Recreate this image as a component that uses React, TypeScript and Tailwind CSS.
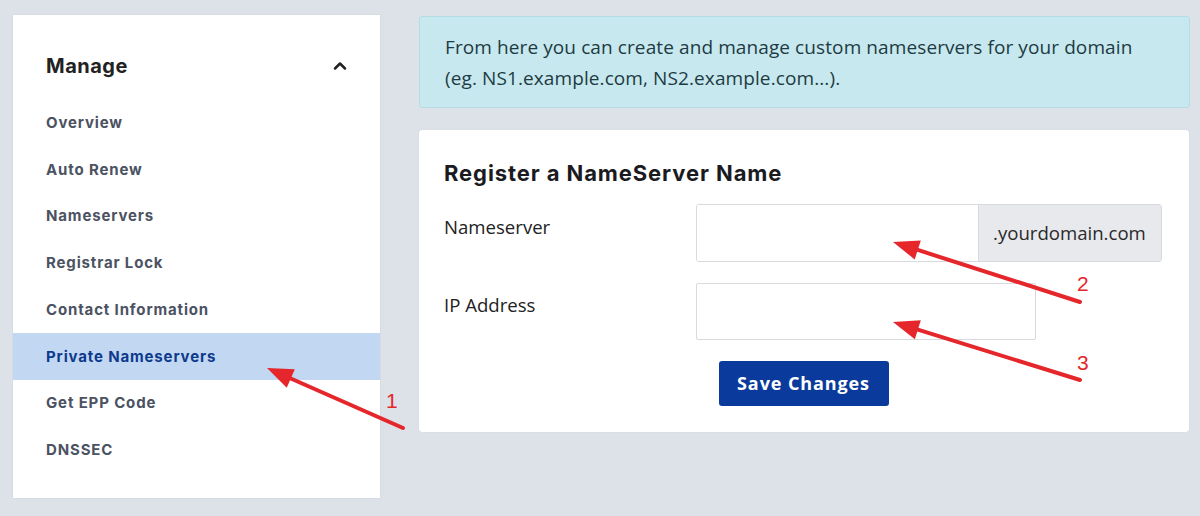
import { ChevronUp } from "lucide-react";

const items = [
  "Overview",
  "Auto Renew",
  "Nameservers",
  "Registrar Lock",
  "Contact Information",
  "Private Nameservers",
  "Get EPP Code",
  "DNSSEC",
];

function Arrow({ x1, y1, x2, y2 }: { x1: number; y1: number; x2: number; y2: number }) {
  // line from tail (x1,y1) to tip (x2,y2) with a filled head
  const a = Math.atan2(y2 - y1, x2 - x1);
  const len = 26;
  const w = 10;
  const bx = x2 - len * Math.cos(a);
  const by = y2 - len * Math.sin(a);
  const px = -Math.sin(a) * w;
  const py = Math.cos(a) * w;
  return (
    <g>
      <line x1={x1} y1={y1} x2={bx} y2={by} stroke="#e5262b" strokeWidth={4} strokeLinecap="round" />
      <polygon points={`${x2},${y2} ${bx + px},${by + py} ${bx - px},${by - py}`} fill="#e5262b" />
    </g>
  );
}

export default function App() {
  return (
    <div className="relative w-[1200px] h-[516px] bg-[#dde1e8] overflow-hidden font-['Inter',sans-serif]">
      <div className="flex gap-[39px] pl-[13px] pt-[15px]">
        {/* Sidebar */}
        <div className="w-[367px] h-[483px] bg-white shadow-[0_0_1px_rgba(0,0,0,0.15)]">
          <div className="flex items-center justify-between pl-[33px] pr-[30px] h-[85px] pt-[17px]">
            <h2 className="text-[20px] font-bold text-[#222] tracking-[0.5px]">Manage</h2>
            <ChevronUp className="w-[20px] h-[20px] text-[#222]" strokeWidth={3} />
          </div>
          <ul>
            {items.map((it) => {
              const active = it === "Private Nameservers";
              return (
                <li
                  key={it}
                  className={`h-[46.7px] flex items-center pl-[33px] text-[15px] font-bold tracking-[0.85px] ${
                    active ? "bg-[#c2d7f2] text-[#0d3a8c]" : "text-[#4b5262]"
                  }`}
                >
                  {it}
                </li>
              );
            })}
          </ul>
        </div>

        {/* Main */}
        <div className="w-[771px] pt-[1px]">
          <div className="h-[92px] bg-[#c7e8ee] border border-[#b6dde6] rounded-[3px] pl-[25px] pt-[15px] text-[19px] leading-[31px] tracking-[0.1px] text-[#1d3b42] font-['Open_Sans',sans-serif]">
            From here you can create and manage custom nameservers for your domain
            <br />
            (eg. NS1.example.com, NS2.example.com...).
          </div>

          <div className="mt-[22px] mr-[1px] h-[302px] bg-white rounded-[3px] shadow-[0_0_1px_rgba(0,0,0,0.15)] pl-[25px] pr-[25px] pt-[29px]">
            <h3 className="text-[22px] font-bold text-[#1b1b1f] leading-[28px] tracking-[0.9px]">Register a NameServer Name</h3>
            <div className="flex mt-[17px] font-['Open_Sans',sans-serif]">
              <div className="w-[252px] pt-[9px] text-[18.6px] text-[#222]">Nameserver</div>
              <div className="flex h-[58px] w-[466px] border border-[#d7d9dd] rounded-[3px] overflow-hidden">
                <div className="w-[281px] bg-white" />
                <div className="flex-1 bg-[#e7e9ed] border-l border-[#d7d9dd] flex items-center pl-[14px] text-[18.6px] text-[#2a2a2a]">
                  .yourdomain.com
                </div>
              </div>
            </div>
            <div className="flex mt-[21px] font-['Open_Sans',sans-serif]">
              <div className="w-[252px] pt-[8px] text-[18.6px] text-[#222]">IP Address</div>
              <div className="h-[57px] w-[340px] border border-[#d7d9dd] rounded-[2px] bg-white" />
            </div>
            <div className="flex justify-center mt-[21px] pr-[1px]">
              <button className="w-[170px] h-[45px] bg-[#0a3b9c] rounded-[3px] text-white text-[18px] font-bold tracking-[0.9px] font-['Open_Sans',sans-serif]">
                Save Changes
              </button>
            </div>
          </div>
        </div>
      </div>

      {/* annotation overlay */}
      <svg className="absolute inset-0 pointer-events-none" width={1200} height={516}>
        <Arrow x1={403} y1={428} x2={267} y2={368} />
        <Arrow x1={1080} y1={302} x2={893} y2={242} />
        <Arrow x1={1080} y1={380} x2={893} y2={322} />
        <text x={386} y={408} fill="#e5262b" fontSize={21} fontFamily="Liberation Sans, sans-serif">1</text>
        <text x={1077} y={291} fill="#e5262b" fontSize={21} fontFamily="Liberation Sans, sans-serif">2</text>
        <text x={1077} y={370} fill="#e5262b" fontSize={21} fontFamily="Liberation Sans, sans-serif">3</text>
      </svg>
    </div>
  );
}
